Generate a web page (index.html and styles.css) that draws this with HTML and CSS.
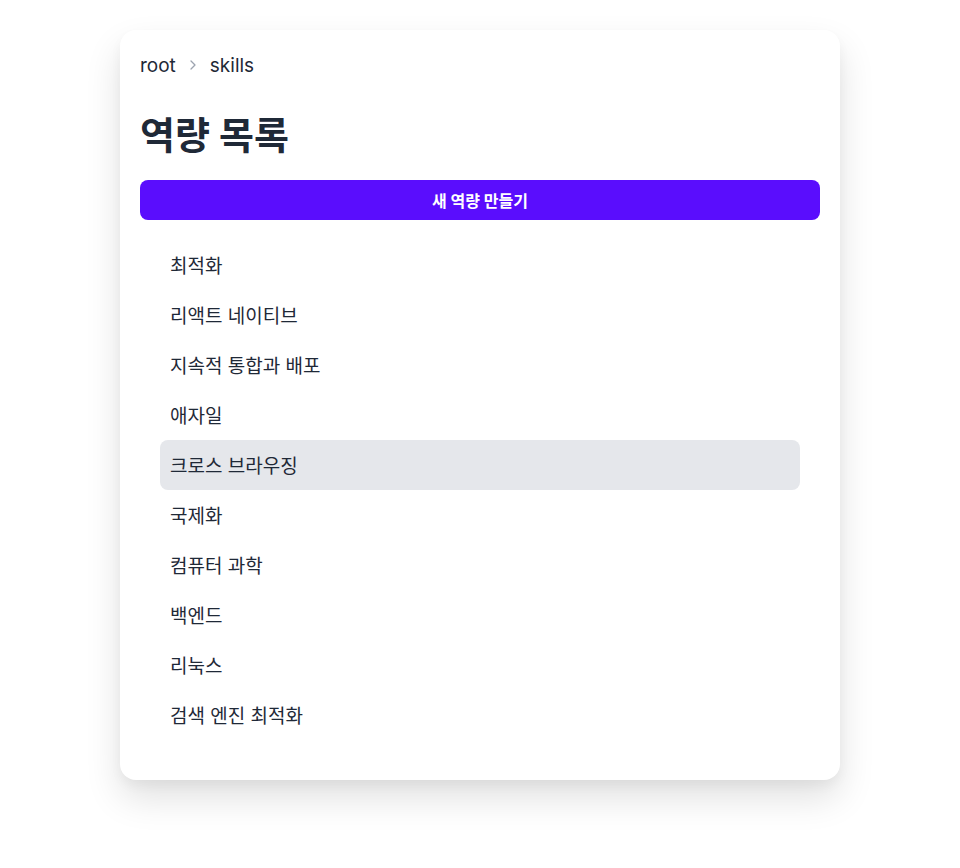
FILE: index.html
```html
<!DOCTYPE html>
<html lang="ko">
<head>
<meta charset="utf-8">
<link rel="stylesheet" href="styles.css">
</head>
<body>
<div class="card">
  <nav class="crumbs">
    <span>root</span>
    <svg class="sep" width="16" height="16" viewBox="0 0 16 16"><path d="M6 4l4 4-4 4" fill="none" stroke="#9ca3af" stroke-width="1.3" stroke-linecap="round" stroke-linejoin="round"/></svg>
    <span>skills</span>
  </nav>
  <h1 class="title">역량 목록</h1>
  <button class="create">새 역량 만들기</button>
  <ul class="list">
    <li>최적화</li>
    <li>리액트 네이티브</li>
    <li>지속적 통합과 배포</li>
    <li>애자일</li>
    <li class="active">크로스 브라우징</li>
    <li>국제화</li>
    <li>컴퓨터 과학</li>
    <li>백엔드</li>
    <li>리눅스</li>
    <li>검색 엔진 최적화</li>
  </ul>
</div>
</body>
</html>
```
FILE: styles.css
```css
* { box-sizing: border-box; }
html, body { min-height: 100%; }
body {
  margin: 0;
  padding: 30px 0 80px;
  background: #fff;
  font-family: Inter, "Noto Sans CJK KR", sans-serif;
  color: #1f2937;
}
.card {
  width: 720px;
  margin: 0 auto;
  padding: 20px;
  background: #fff;
  border-radius: 16px;
  box-shadow: 0 18px 36px rgba(0,0,0,0.12), 0 6px 12px rgba(0,0,0,0.04);
}
.crumbs {
  display: flex;
  align-items: center;
  gap: 9px;
  height: 30px;
  font-size: 19px;
  color: #1f2937;
}
.title {
  margin: 28px 0 18px;
  font-size: 38px;
  line-height: 54px;
  font-weight: 700;
  color: #1f2937;
}
.create {
  display: block;
  width: 100%;
  height: 40px;
  border: 0;
  border-radius: 8px;
  background: #5a0dfd;
  color: #fff;
  font-family: inherit;
  font-size: 16px;
  font-weight: 700;
}
.list {
  list-style: none;
  margin: 0;
  padding: 20px;
}
.list li {
  height: 50px;
  display: flex;
  align-items: center;
  padding: 0 10px 2px;
  font-size: 19px;
  border-radius: 8px;
}
.list li.active { background: #e5e7eb; }
```
